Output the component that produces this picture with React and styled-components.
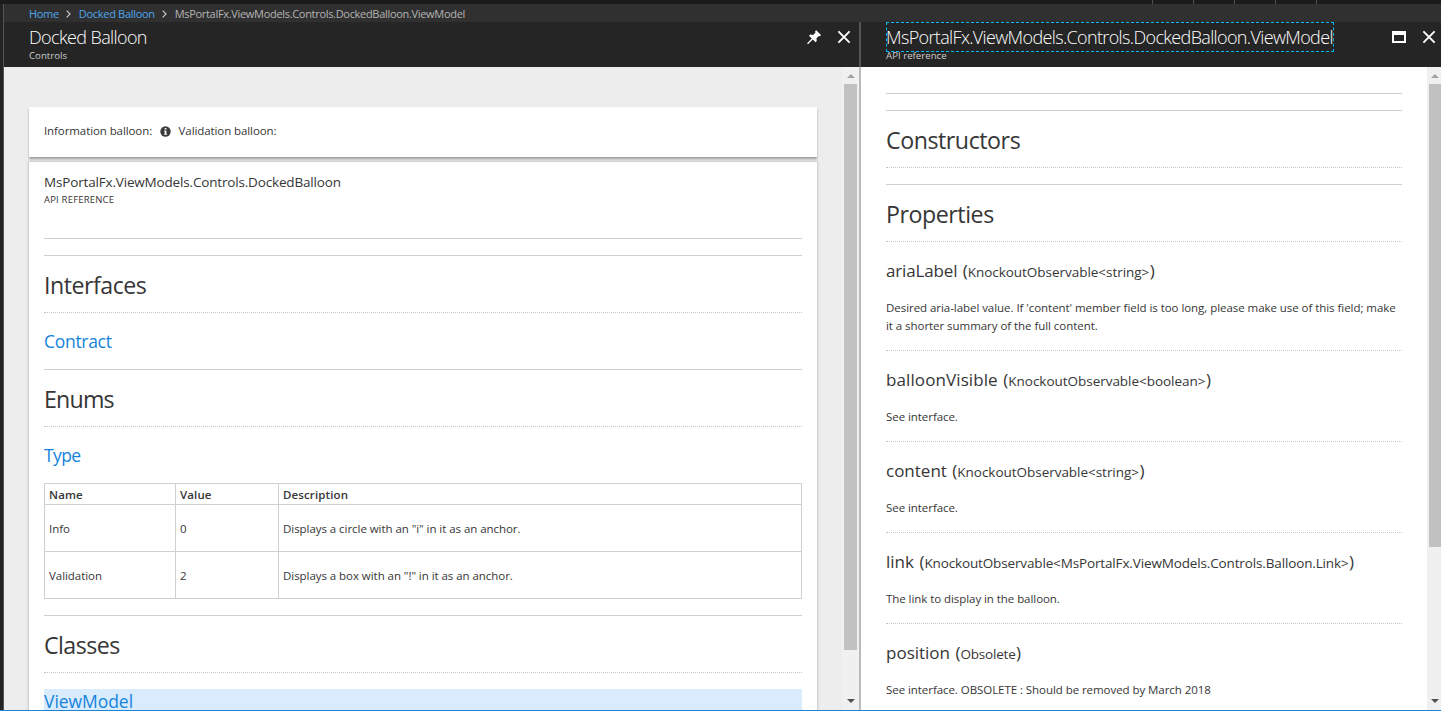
import React from "react";
import styled, { createGlobalStyle } from "styled-components";

const GlobalStyle = createGlobalStyle`
  * { box-sizing: border-box; }
  body {
    margin: 0;
    overflow: hidden;
    background: #fff;
    color: #363636;
    font-family: "Open Sans", "Noto Sans", sans-serif;
    font-size: 11.5px;
    line-height: 18px;
  }
  h1, h2, h3, p { margin: 0; font-weight: inherit; }
  a { color: #1583da; text-decoration: none; }
`;

const Portal = styled.div`
  display: flex;
  flex-direction: column;
  width: 1441px;
  height: 711px;
  border-bottom: 1px solid #1a83d6;
  overflow: hidden;
`;

const TopBar = styled.div`
  display: flex;
  flex: none;
  height: 4px;
  padding-left: 1152px;
  background: #1b1b1b;
`;

const TopSlot = styled.span`
  width: 41px;
  border-left: 1px solid #505050;
`;

const Workspace = styled.div`
  display: flex;
  flex: 1;
  min-height: 0;
`;

const Rail = styled.div`
  flex: none;
  width: 4px;
  background: #252321;
  border-right: 1px solid #555;
`;

const Journey = styled.div`
  display: flex;
  flex-direction: column;
  flex: 1;
  min-width: 0;
`;

const Breadcrumb = styled.nav`
  display: flex;
  align-items: center;
  flex: none;
  height: 18px;
  padding: 2px 0 0 25px;
  background: #303030;
  color: #b4b4b4;
  font-size: 11px;
  letter-spacing: -0.31px;
  white-space: nowrap;
  a { color: #4da6ef; }
  svg { margin: 0 8px 0 7px; }
`;

const Blades = styled.div`
  display: flex;
  flex: 1;
  min-height: 0;
`;

const Blade = styled.section`
  display: flex;
  flex-direction: column;
  flex: none;
  width: ${(p) => p.$width}px;
`;

const Divider = styled.div`
  flex: none;
  width: 2px;
  background: linear-gradient(#555 45px, #bababa 45px);
`;

const BladeHeader = styled.header`
  display: flex;
  justify-content: space-between;
  flex: none;
  height: 45px;
  padding-left: 25px;
  background: #252525;
  color: #fff;
`;

const Titles = styled.div`
  display: flex;
  flex-direction: column;
  align-items: flex-start;
`;

const BladeTitle = styled.h1`
  height: 30px;
  width: ${(p) => (p.$focused ? "448px" : "auto")};
  padding-top: ${(p) => (p.$focused ? 0 : 1)}px;
  border: ${(p) => (p.$focused ? "1px dashed #00b7f1" : "none")};
  overflow: hidden;
  font-size: 18px;
  font-weight: 300;
  line-height: 29px;
  letter-spacing: ${(p) => (p.$focused ? -0.645 : -0.62)}px;
  white-space: nowrap;
  text-indent: ${(p) => (p.$focused ? -1 : 0)}px;
`;

const BladeSubtitle = styled.div`
  margin-top: -2px;
  color: #cdcdcd;
  font-size: 9.7px;
  line-height: 12px;
  letter-spacing: 0;
`;

const Actions = styled.div`
  display: flex;
  gap: 16px;
  padding: 8px ${(p) => p.$end}px 0 0;
  color: #fff;
`;

const BladeBody = styled.div`
  display: flex;
  flex: 1;
  min-height: 0;
  background: ${(p) => (p.$grey ? "#ededed" : "#fff")};
`;

const Scrollbar = styled.div`
  display: flex;
  flex-direction: column;
  align-items: center;
  flex: none;
  width: ${(p) => p.$width}px;
  padding: 0 ${(p) => p.$end}px 6px 2px;
  background: #f0f0f0;
`;

const Thumb = styled.div`
  width: 100%;
  height: ${(p) => p.$height}px;
  background: #c1c1c1;
`;

const Arrow = styled.div`
  height: ${(p) => (p.$down ? 12 : 17)}px;
  margin-top: ${(p) => (p.$down ? "auto" : 0)};
  padding-top: 7px;
  line-height: 0;
`;

const CardColumn = styled.div`
  display: flex;
  flex-direction: column;
  gap: 5px;
  flex: 1;
  padding: 40px 25px 0;
  overflow: hidden;
`;

const Card = styled.article`
  flex: none;
  padding: 0 15px;
  background: #fff;
`;

const SampleCard = styled(Card)`
  display: flex;
  align-items: flex-start;
  height: 50px;
  padding-top: 15px;
  letter-spacing: -0.09px;
  box-shadow: 0 2px 2px rgba(0, 0, 0, 0.34);
  svg { margin: 4px 8px 0 7.5px; }
`;

const DocCard = styled(Card)`
  height: 620px;
  padding-top: 11px;
  box-shadow: 0 0 2px 1px rgba(0, 0, 0, 0.16);
`;

const DocTitle = styled.h1`
  font-size: 13.5px;
  line-height: 19px;
  letter-spacing: -0.17px;
`;

const DocKind = styled.div`
  height: 46px;
  font-size: 9.5px;
  line-height: 15px;
  letter-spacing: 0.19px;
`;

const Rule = styled.div`
  height: 1px;
  background: #d0d0d0;
`;

const SpacedRule = styled(Rule)`
  margin-top: 16px;
`;

const SectionTitle = styled.h2`
  height: 57px;
  padding-top: 1px;
  border-bottom: 1px dotted #c4c4c4;
  font-size: 23.2px;
  line-height: 56px;
  letter-spacing: ${(p) => p.$track ?? -0.5}px;
`;

const TypeLink = styled.h3`
  height: 56px;
  font-size: 17.5px;
  line-height: 56px;
  letter-spacing: ${(p) => p.$track}px;
`;

const SelectedLink = styled(TypeLink)`
  height: 26px;
  margin-top: 16px;
  background: #d9ecfe;
  line-height: 24px;
`;

const Table = styled.div`
  display: grid;
  grid-template-columns: 131px 103px 1fr;
  grid-template-rows: 21px 47px 47px;
  margin-bottom: 16px;
  border: solid #d0d0d0;
  border-width: 1px 0 0 1px;
`;

const Cell = styled.div`
  display: flex;
  align-items: center;
  padding: 2px 4px 0;
  border: solid #d0d0d0;
  border-width: 0 1px 1px 0;
  font-weight: ${(p) => (p.$head ? 600 : 400)};
  letter-spacing: ${(p) => (p.$head ? 0.12 : -0.05)}px;
`;

const ApiDoc = styled.div`
  flex: 1;
  padding: 26px 25px 0;
  overflow: hidden;
`;

const Member = styled.div`
  padding-bottom: 15px;
  border-bottom: 1px dotted #c4c4c4;
`;

const MemberName = styled.h3`
  height: 57px;
  padding-top: 1px;
  font-size: 17px;
  line-height: 56px;
  letter-spacing: ${(p) => p.$track}px;
  white-space: nowrap;
`;

const MemberType = styled.small`
  font-size: 13.5px;
  letter-spacing: ${(p) => p.$track}px;
`;

const Paren = styled.span`
  margin-left: ${(p) => (p.$open ? 1 : 0.5)}px;
  letter-spacing: 0;
`;

const MemberText = styled.p`
  letter-spacing: ${(p) => p.$track ?? -0.06}px;
  white-space: pre-line;
`;

const Chevron = () => (
  <svg width="5" height="8" viewBox="0 0 5 8" fill="none" stroke="#c8c8c8" strokeWidth="1.2">
    <path d="M0.7 0.7 4 4 0.7 7.3" />
  </svg>
);

const CloseIcon = () => (
  <svg width="14" height="14" viewBox="0 0 14 14" stroke="currentColor" strokeWidth="1.9">
    <path d="M1.4 1.4 12.6 12.6M12.6 1.4 1.4 12.6" />
  </svg>
);

const PinIcon = () => (
  <svg width="14" height="15" viewBox="0 0 14 15" fill="currentColor">
    <path d="M9.2 0.3 14 5.1 13 6.2 11.8 5.9 9.5 8.2 9.7 11 8.6 12.2 5.8 9.4 1.2 13.9 0.3 14 0.4 13 4.8 8.4 2 5.7 3.2 4.6 6.1 4.9 8.5 2.5 8.1 1.3Z" />
  </svg>
);

const MaximizeIcon = () => (
  <svg width="14" height="14" viewBox="0 0 14 14" fill="currentColor" fillRule="evenodd">
    <path d="M0 1H14V13H0ZM2 5V11H12V5Z" />
  </svg>
);

const InfoIcon = () => (
  <svg width="11" height="11" viewBox="0 0 11 11">
    <circle cx="5.5" cy="5.5" r="5.2" fill="#3c3c3c" />
    <path d="M4.7 2h1.7v1.5H4.7zM4.2 4.5h2.2v3.3h.7v.9H4.1v-.9h.6V5.4h-.5z" fill="#fff" />
  </svg>
);

const Scroller = ({ width, end, thumb }) => (
  <Scrollbar $width={width} $end={end}>
    <Arrow>
      <svg width="8" height="4" viewBox="0 0 8 4"><path d="M0 4 4 0 8 4Z" fill="#a3a3a3" /></svg>
    </Arrow>
    <Thumb $height={thumb} />
    <Arrow $down>
      <svg width="8" height="4" viewBox="0 0 8 4"><path d="M0 0H8L4 4Z" fill="#505050" /></svg>
    </Arrow>
  </Scrollbar>
);

const members = [
  {
    name: "ariaLabel", track: -0.15, type: "KnockoutObservable<string>", typeTrack: -0.03, textTrack: -0.05,
    text: "Desired aria-label value. If 'content' member field is too long, please make use of this field; make\nit a shorter summary of the full content.",
  },
  { name: "balloonVisible", track: 0.1, type: "KnockoutObservable<boolean>", typeTrack: -0.03, text: "See interface." },
  { name: "content", track: 0, type: "KnockoutObservable<string>", typeTrack: -0.03, text: "See interface." },
  { name: "link", track: 0, type: "KnockoutObservable<MsPortalFx.ViewModels.Controls.Balloon.Link>", typeTrack: -0.14, text: "The link to display in the balloon." },
  { name: "position", track: 0, type: "Obsolete", typeTrack: -0.2, text: "See interface. OBSOLETE : Should be removed by March 2018" },
];

const rows = [
  ["Info", "0", 'Displays a circle with an "i" in it as an anchor.'],
  ["Validation", "2", 'Displays a box with an "!" in it as an anchor.'],
];

export default function App() {
  return (
    <>
      <GlobalStyle />
      <Portal>
        <TopBar>
          <TopSlot /><TopSlot /><TopSlot /><TopSlot /><TopSlot />
        </TopBar>
        <Workspace>
          <Rail />
          <Journey>
            <Breadcrumb>
              <a>Home</a><Chevron /><a>Docked Balloon</a><Chevron />
              <span>MsPortalFx.ViewModels.Controls.DockedBalloon.ViewModel</span>
            </Breadcrumb>
            <Blades>
              <Blade $width={855}>
                <BladeHeader>
                  <Titles>
                    <BladeTitle>Docked Balloon</BladeTitle>
                    <BladeSubtitle>Controls</BladeSubtitle>
                  </Titles>
                  <Actions $end={8}><PinIcon /><CloseIcon /></Actions>
                </BladeHeader>
                <BladeBody $grey>
                  <CardColumn>
                    <SampleCard>
                      <span>Information balloon:</span><InfoIcon /><span>Validation balloon:</span>
                    </SampleCard>
                    <DocCard>
                      <DocTitle>MsPortalFx.ViewModels.Controls.DockedBalloon</DocTitle>
                      <DocKind>API REFERENCE</DocKind>
                      <Rule />
                      <SpacedRule />
                      <SectionTitle>Interfaces</SectionTitle>
                      <TypeLink $track={-0.3}><a>Contract</a></TypeLink>
                      <Rule />
                      <SectionTitle $track={-0.8}>Enums</SectionTitle>
                      <TypeLink $track={-0.6}><a>Type</a></TypeLink>
                      <Table>
                        <Cell $head>Name</Cell><Cell $head>Value</Cell><Cell $head>Description</Cell>
                        {rows.map((row) => row.map((text) => <Cell key={text}>{text}</Cell>))}
                      </Table>
                      <Rule />
                      <SectionTitle $track={-0.55}>Classes</SectionTitle>
                      <SelectedLink $track={-0.05}><a>ViewModel</a></SelectedLink>
                    </DocCard>
                  </CardColumn>
                  <Scroller width={17} end={2} thumb={566} />
                </BladeBody>
              </Blade>
              <Divider />
              <Blade $width={580}>
                <BladeHeader>
                  <Titles>
                    <BladeTitle $focused>MsPortalFx.ViewModels.Controls.DockedBalloon.ViewModel</BladeTitle>
                    <BladeSubtitle>API reference</BladeSubtitle>
                  </Titles>
                  <Actions $end={5}><MaximizeIcon /><CloseIcon /></Actions>
                </BladeHeader>
                <BladeBody>
                  <ApiDoc>
                    <Rule />
                    <SpacedRule />
                    <SectionTitle $track={-0.45}>Constructors</SectionTitle>
                    <SpacedRule />
                    <SectionTitle $track={-0.45}>Properties</SectionTitle>
                    {members.map((m) => (
                      <Member key={m.name}>
                        <MemberName $track={m.track}>
                          {m.name} <Paren $open>(</Paren><MemberType $track={m.typeTrack}>{m.type}</MemberType><Paren>)</Paren>
                        </MemberName>
                        <MemberText $track={m.textTrack}>{m.text}</MemberText>
                      </Member>
                    ))}
                  </ApiDoc>
                  <Scroller width={14} end={0} thumb={463} />
                </BladeBody>
              </Blade>
            </Blades>
          </Journey>
        </Workspace>
      </Portal>
    </>
  );
}
